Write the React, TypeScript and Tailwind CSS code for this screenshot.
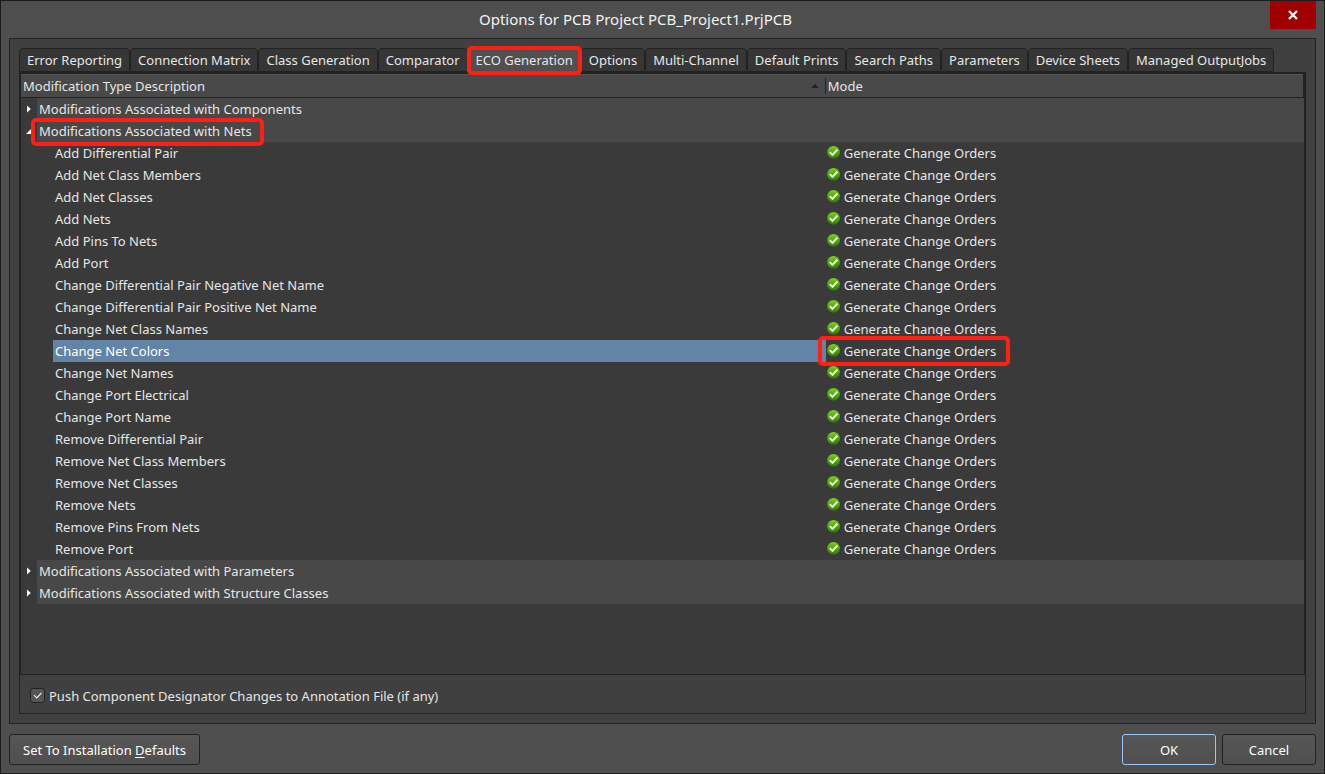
import { useState } from "react";
import type { ReactNode } from "react";

const TABS = [
  "Error Reporting",
  "Connection Matrix",
  "Class Generation",
  "Comparator",
  "ECO Generation",
  "Options",
  "Multi-Channel",
  "Default Prints",
  "Search Paths",
  "Parameters",
  "Device Sheets",
  "Managed OutputJobs",
];

const NET_CHANGES = [
  "Add Differential Pair",
  "Add Net Class Members",
  "Add Net Classes",
  "Add Nets",
  "Add Pins To Nets",
  "Add Port",
  "Change Differential Pair Negative Net Name",
  "Change Differential Pair Positive Net Name",
  "Change Net Class Names",
  "Change Net Colors",
  "Change Net Names",
  "Change Port Electrical",
  "Change Port Name",
  "Remove Differential Pair",
  "Remove Net Class Members",
  "Remove Net Classes",
  "Remove Nets",
  "Remove Pins From Nets",
  "Remove Port",
];

function Highlight({ className }: { className: string }) {
  return (
    <span
      aria-hidden="true"
      className={`pointer-events-none absolute z-10 rounded-[5px] border-4 border-[#ff2015] ${className}`}
    />
  );
}

function CheckBadge() {
  return (
    <svg width="14" height="14" viewBox="0 0 14 14" aria-hidden="true" className="shrink-0">
      <defs>
        <linearGradient id="badge" x1="0" y1="0" x2="0" y2="1">
          <stop offset="0" stopColor="#7fce1c" />
          <stop offset="0.5" stopColor="#4fae08" />
          <stop offset="1" stopColor="#2c7d02" />
        </linearGradient>
      </defs>
      <circle cx="6.5" cy="6.3" r="6.3" fill="url(#badge)" />
      <path d="M2.8 6.2 5.5 8.9 10.4 3.6" fill="none" stroke="#fff" strokeWidth="1.9" />
    </svg>
  );
}

function GroupRow({
  label,
  open,
  onToggle,
  children,
}: {
  label: string;
  open: boolean;
  onToggle: () => void;
  children?: ReactNode;
}) {
  return (
    <tr className="h-[22px]">
      <td className="p-0">
        <button
          type="button"
          aria-label={label}
          aria-expanded={open}
          onClick={onToggle}
          className="flex h-[22px] w-full items-center pl-[5px]"
        >
          <svg width="8" height="8" viewBox="0 0 8 8" fill="#fff" aria-hidden="true">
            {open ? <path d="M5 2v5H0z" /> : <path d="M1 0.5 4.8 4 1 7.5z" />}
          </svg>
        </button>
      </td>
      <td colSpan={2} className="bg-[#484848] p-0">
        <div className="relative w-fit pl-0.5 leading-[22px]">
          {label}
          {children}
        </div>
      </td>
    </tr>
  );
}

export default function App() {
  const [tab, setTab] = useState("ECO Generation");
  const [selected, setSelected] = useState("Change Net Colors");
  const [open, setOpen] = useState<string[]>(["Nets"]);
  const [push, setPush] = useState(true);

  const toggle = (name: string) =>
    setOpen((o) => (o.includes(name) ? o.filter((n) => n !== name) : [...o, name]));

  const button =
    "h-[31px] rounded-[3px] border bg-linear-to-b from-[#565656] to-[#4f4f4f] text-white";

  return (
    <div className="flex min-h-screen flex-col border border-[#1c1c1c] bg-[#4e4e4e] font-['Noto_Sans',sans-serif] text-[13px] leading-[22px] text-[#e6e6e6]">
      <header className="flex h-[37px] items-start pr-2">
        <h1 className="flex-1 text-center text-[15px] leading-[36px] text-[#f2f2f2]">
          Options for PCB Project PCB_Project1.PrjPCB
        </h1>
        <button
          type="button"
          aria-label="Close"
          className="flex h-7 w-[46px] items-center justify-center bg-[#a00000]"
        >
          <svg width="10" height="10" viewBox="0 0 10 10" aria-hidden="true">
            <path d="M1 1 9 9M9 1 1 9" stroke="#fff" strokeWidth="2.2" />
          </svg>
        </button>
      </header>

      <main className="mx-2 flex flex-1 flex-col border border-[#222] bg-[#404040] px-[9px] pt-[9px] pb-[9px]">
        <div role="tablist" className="flex whitespace-nowrap">
          {TABS.map((name) => (
            <button
              key={name}
              type="button"
              role="tab"
              aria-selected={tab === name}
              onClick={() => setTab(name)}
              className={`relative h-6 rounded-t-[4px] border border-[#222] px-[7px] leading-[22px] ${
                tab === name ? "border-b-[#505050] bg-[#505050]" : "bg-[#363636]"
              }`}
            >
              {name}
              {name === "ECO Generation" && <Highlight className="-inset-x-0.5 -top-[3px] -bottom-1" />}
            </button>
          ))}
        </div>

        <section className="flex flex-1 flex-col border border-[#222]">
          <div className="flex-1 border border-[#222] bg-[#3a3a3a]">
            <table className="w-full table-fixed border-collapse text-left">
              <colgroup>
                <col className="w-4" />
                <col className="w-[61.5%]" />
                <col />
              </colgroup>
              <thead>
                <tr className="h-[23px] border-t border-r border-b border-t-[#555] border-r-[#222] border-b-[#222] bg-[#494949]">
                  <th colSpan={2} className="p-0 font-normal">
                    <div className="flex items-center justify-between border-r border-[#222] pr-1.5 pl-0.5 leading-4">
                      Modification Type Description
                      <svg width="8" height="4" viewBox="0 0 8 4" aria-hidden="true">
                        <path d="M0 4 4 0 8 4z" fill="#222" />
                      </svg>
                    </div>
                  </th>
                  <th className="p-0 pl-0.5 leading-4 font-normal">Mode</th>
                </tr>
              </thead>
              <tbody>
                <GroupRow
                  label="Modifications Associated with Components"
                  open={open.includes("Components")}
                  onToggle={() => toggle("Components")}
                />
                <GroupRow
                  label="Modifications Associated with Nets"
                  open={open.includes("Nets")}
                  onToggle={() => toggle("Nets")}
                >
                  <Highlight className="-top-0.5 -right-3 -bottom-1 -left-1.5" />
                </GroupRow>
                {open.includes("Nets") &&
                  NET_CHANGES.map((name) => (
                    <tr key={name} className="h-[22px]" onClick={() => setSelected(name)}>
                      <td className="p-0" />
                      <td className="p-0 pl-4">
                        <div className={`pl-0.5 ${selected === name ? "bg-[#6384a6] text-white" : ""}`}>
                          {name}
                        </div>
                      </td>
                      <td className="p-0">
                        <div className="relative flex w-fit items-center gap-[3px] pl-px">
                          <CheckBadge />
                          <span>Generate Change Orders</span>
                          {name === "Change Net Colors" && (
                            <Highlight className="-top-1 -right-3.5 -bottom-1 -left-2" />
                          )}
                        </div>
                      </td>
                    </tr>
                  ))}
                <GroupRow
                  label="Modifications Associated with Parameters"
                  open={open.includes("Parameters")}
                  onToggle={() => toggle("Parameters")}
                />
                <GroupRow
                  label="Modifications Associated with Structure Classes"
                  open={open.includes("Structure")}
                  onToggle={() => toggle("Structure")}
                />
              </tbody>
            </table>
          </div>
          <div className="flex h-[38px] items-center pt-1 pl-2.5">
            <label className="flex items-center gap-1">
              <span className="relative flex pb-0.5">
                <input
                  type="checkbox"
                  checked={push}
                  onChange={(e) => setPush(e.target.checked)}
                  className="peer size-[15px] appearance-none rounded-[3px] border border-[#222] bg-[#555]"
                />
                <svg
                  viewBox="0 0 15 15"
                  aria-hidden="true"
                  className="pointer-events-none absolute top-0 left-0 hidden size-[15px] peer-checked:block"
                >
                  <path d="M4 7.2 6.8 10 11.4 5" fill="none" stroke="#e6e6e6" strokeWidth="1.2" />
                </svg>
              </span>
              Push Component Designator Changes to Annotation File (if any)
            </label>
          </div>
        </section>
      </main>

      <footer className="flex gap-1.5 px-2 pt-2.5 pb-2">
        <button type="button" className={`${button} mr-auto border-[#222] px-[13px]`}>
          Set To Installation <span className="underline underline-offset-2">D</span>efaults
        </button>
        <button type="button" className={`${button} w-[94px] border-[#99c9f7]`}>
          OK
        </button>
        <button type="button" className={`${button} w-[94px] border-[#222]`}>
          Cancel
        </button>
      </footer>
    </div>
  );
}
